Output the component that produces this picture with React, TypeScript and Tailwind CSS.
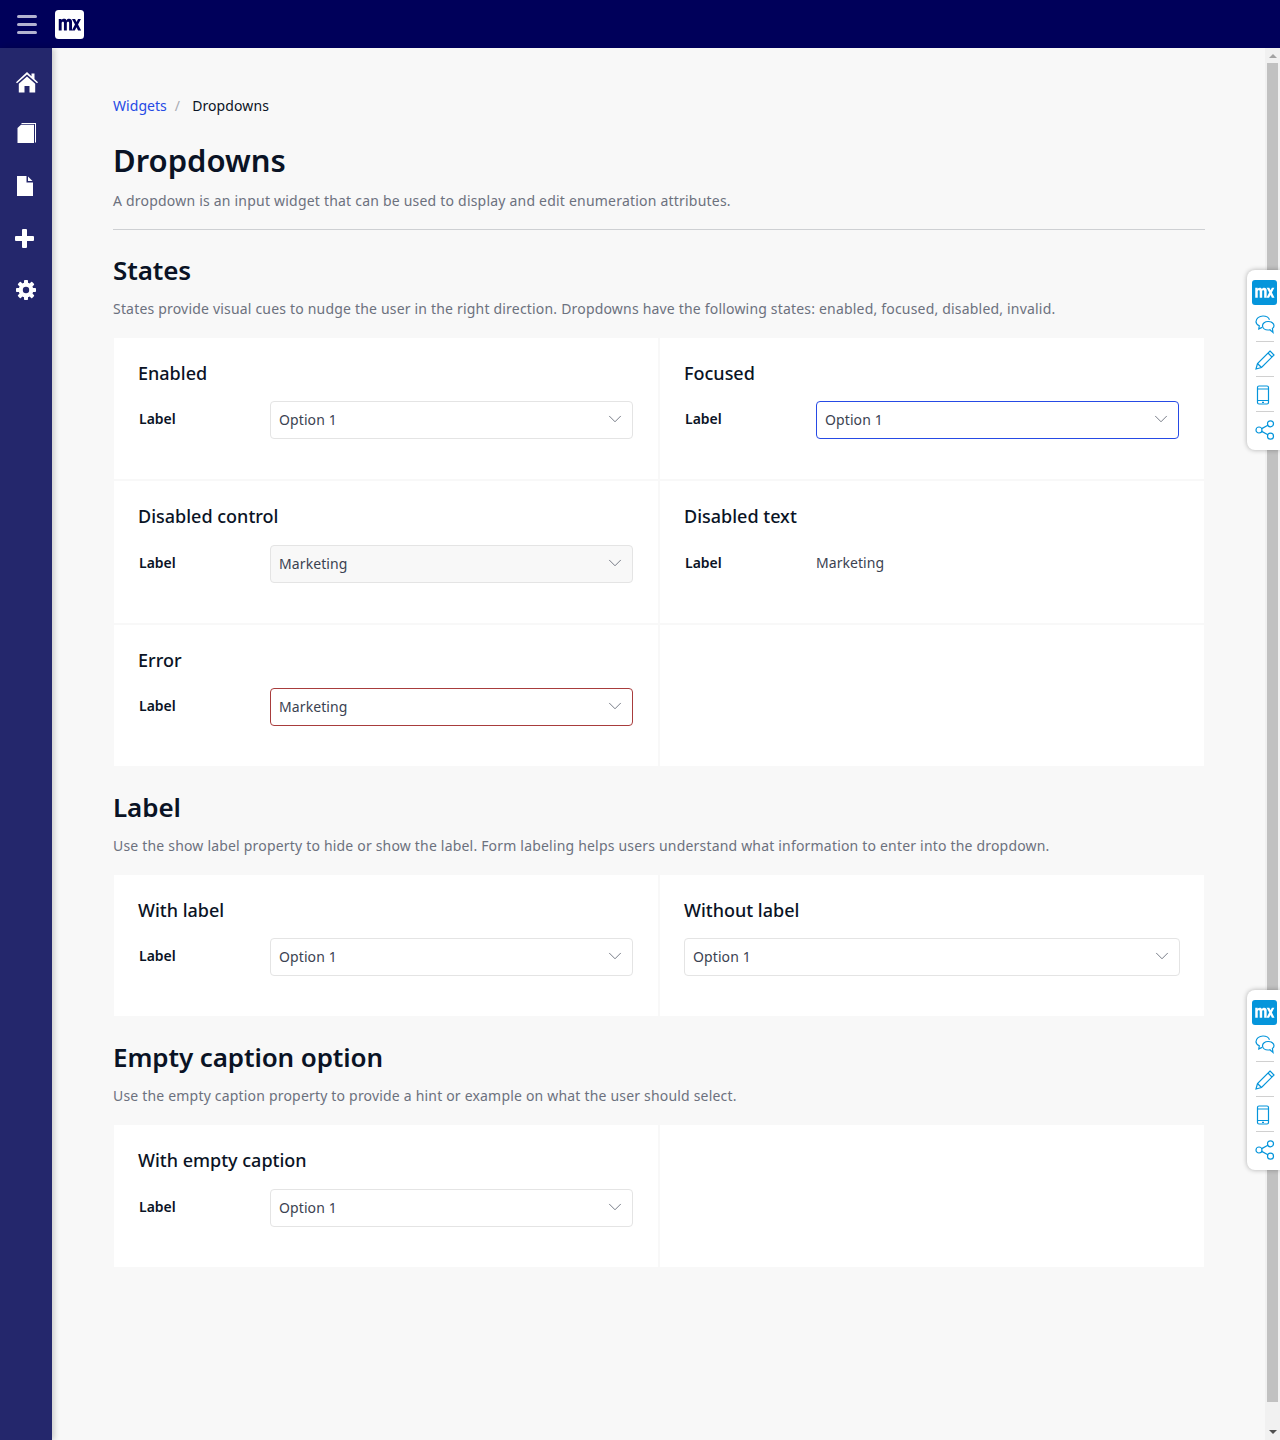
import React from "react";
import { ChevronDown } from "lucide-react";

const navy = "#00005a";

function Logo({ bg, fg, size }: { bg: string; fg: string; size: number }) {
  return (
    <svg width={size} height={size} viewBox="0 0 29 29">
      <rect width="29" height="29" rx="3.5" fill={bg} />
      <g transform="translate(0.4 0.4) scale(0.96)">
        <path
          fill={fg}
          d="M3.500 9h2.900v1.300c.6-1 1.500-1.500 2.600-1.500 1.200 0 2.100.5 2.500 1.600.7-1.100 1.700-1.600 2.800-1.600 1.900 0 3 1.100 3 3.100V21h-3v-7.700c0-.9-.4-1.400-1.100-1.400-.8 0-1.300.6-1.300 1.500V21h-3v-7.700c0-.9-.4-1.400-1.100-1.400-.8 0-1.300.6-1.300 1.500V21h-3z"
        />
        <path fill={fg} d="M17.300 9h3.200l1.500 3 1.600-3h3l-3 5.700 3.200 6.300h-3.200L22 17.600 20.200 21h-3.100l3.300-6.200z" />
      </g>
    </svg>
  );
}

function HomeIcon() {
  return (
    <svg width="22" height="21" viewBox="0 0 22 21" fill="white">
      <path d="M11 0 0 10.200l1 1.100L11 2.600l10 8.700 1-1.100-3.500-3.300V1.500h-3v2.800z" />
      <path d="M2.800 11.800 11 4.400l8.200 7.400v8.700h-5.700V14h-5v6.500H2.800z" />
    </svg>
  );
}
function BookIcon() {
  return (
    <svg width="20" height="21" viewBox="0 0 20 21" fill="white">
      <path d="M4.500 0H19v19.500h-1V1H4.500z" />
      <path d="M4 1.800H17V20H0.500V5z" />
    </svg>
  );
}
function FileIcon() {
  return (
    <svg width="16" height="20" viewBox="0 0 16 20" fill="white">
      <path d="M0 0h9.500v6.500H16V20H0z" />
      <path d="M11 0.500 15.500 5H11z" />
    </svg>
  );
}
function PlusIcon() {
  return (
    <svg width="19" height="19" viewBox="0 0 19 19" fill="white">
      <path d="M7 1a1 1 0 0 1 1-1h3a1 1 0 0 1 1 1v6h6a1 1 0 0 1 1 1v3a1 1 0 0 1-1 1h-6v6a1 1 0 0 1-1 1H8a1 1 0 0 1-1-1v-6H1a1 1 0 0 1-1-1V8a1 1 0 0 1 1-1h6z" />
    </svg>
  );
}
function GearIcon() {
  return (
    <svg width="20" height="20" viewBox="0 0 20 20">
      <g fill="white">
        <circle cx="10" cy="10" r="7.400" />
        {[0, 45, 90, 135, 180, 225, 270, 315].map((a) => (
          <rect key={a} x="8" y="0" width="4" height="5" rx="0.800" transform={`rotate(${a} 10 10)`} />
        ))}
      </g>
      <circle cx="10" cy="10" r="3.200" fill="#24276c" />
    </svg>
  );
}

function FloatingBar({ top }: { top: string }) {
  return (
    <div className={`absolute right-0 ${top} w-[33px] h-[180px] bg-white rounded-l-lg shadow-[0_0_5px_rgba(0,0,0,0.3)] flex flex-col items-center pt-[10px] pl-[2px]`}>
      <Logo bg="#0595db" fg="white" size={25} />
      <svg className="mt-[10px]" width="20" height="20" viewBox="0 0 20 20" fill="none" stroke="#0595db" strokeWidth="1.200">
        <path d="M7 12.400 3.800 14l.5-3.300C2.300 9.800 1 8.300 1 6.700 1 3.500 4.200 1 8 1c3 0 5.600 1.500 6.500 3.700" />
        <path d="M13 6.500c-3 0-5.500 1.900-5.500 4.300s2.500 4.200 5.500 4.200c.7 0 1.300-.1 1.900-.3l3.100 2.800-.6-3.900c1-.7 1.600-1.700 1.600-2.800 0-2.300-2.600-4.300-5.700-4.300z" />
      </svg>
      <div className="w-[18px] h-px bg-[#d0d0d0] mt-[6px]" />
      <svg className="mt-[8px]" width="20" height="20" viewBox="0 0 20 20" fill="none" stroke="#0595db" strokeWidth="1.200">
        <path d="M15 1 19 5 6.500 17.500 1 19l1.500-5.500z" />
        <path d="M13 3l4 4M2.500 13.500l4 4" />
      </svg>
      <div className="w-[18px] h-px bg-[#d0d0d0] mt-[6px]" />
      <svg className="mt-[8px] -ml-[3px]" width="20" height="20" viewBox="0 0 20 20" fill="none" stroke="#0595db" strokeWidth="1.200">
        <rect x="4.500" y="1" width="11" height="18" rx="1.500" />
        <path d="M4.500 4h11M4.500 15.500h11M9 17.300h2" />
      </svg>
      <div className="w-[18px] h-px bg-[#d0d0d0] mt-[6px]" />
      <svg className="mt-[8px]" width="20" height="20" viewBox="0 0 20 20" fill="none" stroke="#0595db" strokeWidth="1.200">
        <circle cx="4" cy="10" r="3" />
        <circle cx="15.500" cy="3.800" r="3" />
        <circle cx="15.500" cy="16.200" r="3" />
        <path d="M6.700 8.600l6.200-3.400M6.700 11.400l6.200 3.400" />
      </svg>
    </div>
  );
}

function Select({ value, variant = "default" }: { value: string; variant?: "default" | "focus" | "disabled" | "error" }) {
  const cls = {
    default: "border-[#e4e4e4] bg-white",
    focus: "border-[#264ae5] bg-white",
    disabled: "border-[#e4e4e4] bg-[#f8f8f8]",
    error: "border-[#a83c3c] bg-white",
  }[variant];
  return (
    <div className={`h-[38px] flex-1 min-w-0 border rounded flex items-center justify-between pl-2 pr-[6px] text-[14px] tracking-[0.1px] text-[#3b4251] ${cls}`}>
      <span className="-mt-[2px]">{value}</span>
      <ChevronDown size={22} strokeWidth={0.75} className="text-[#3b4251] -mt-[2px]" />
    </div>
  );
}

function Cell({ title, children, h = "h-[141px]" }: { title?: string; children?: React.ReactNode; h?: string }) {
  return (
    <div className={`bg-white px-6 pt-[22px] ${h}`}>
      {title && <h4 className="text-[18px] leading-[27px] font-medium text-[#0a1325] mb-[14px]">{title}</h4>}
      {children}
    </div>
  );
}

function Field({ children }: { children: React.ReactNode }) {
  return (
    <div className="flex items-start pr-px">
      <label className="w-[132px] pl-px pt-[7px] text-[14px] leading-[21px] font-semibold text-[#0a1325] shrink-0">Label</label>
      {children}
    </div>
  );
}

function Section({ title, text, className = "" }: { title: string; text: string; className?: string }) {
  return (
    <div className={className}>
      <h2 className="text-[26px] leading-[39px] font-semibold tracking-[-0.1px] text-[#0a1325]">{title}</h2>
      <p className="text-[14px] leading-[21px] tracking-[0.19px] text-[#6c717e] mt-[8px]">{text}</p>
    </div>
  );
}

function Grid({ children }: { children: React.ReactNode }) {
  return <div className="mx-px grid grid-cols-2 gap-[2px] bg-[#f8f8f8]">{children}</div>;
}

function NavItem({ children, className = "" }: { children: React.ReactNode; className?: string }) {
  return <div className={`h-[52px] w-full flex items-center justify-center ${className}`}>{children}</div>;
}

export default function App() {
  return (
    <div className="relative h-[1440px] overflow-hidden bg-[#f8f8f8] font-['Noto_Sans',sans-serif]">
      <header className="h-12 flex items-center" style={{ background: navy }}>
        <div className="w-[55px] pl-[17px] flex flex-col gap-[5px] shrink-0">
          <span className="block w-5 h-[3px] rounded-sm bg-[#b3b3d0]" />
          <span className="block w-5 h-[3px] rounded-sm bg-[#b3b3d0]" />
          <span className="block w-5 h-[3px] rounded-sm bg-[#b3b3d0]" />
        </div>
        <Logo bg="white" fg={navy} size={29} />
      </header>
      <div className="flex h-[1392px]">
        <aside className="w-[52px] shrink-0 bg-[#24276c] flex flex-col items-center z-10 shadow-[2px_0_6px_rgba(0,0,0,0.2)]">
          <NavItem className="mt-2 pl-[2px]"><HomeIcon /></NavItem>
          <NavItem className="pb-[2px] pl-[2px]"><BookIcon /></NavItem>
          <NavItem className="pr-[2px]"><FileIcon /></NavItem>
          <NavItem className="pr-[3px] pt-[1px]"><PlusIcon /></NavItem>
          <NavItem><GearIcon /></NavItem>
        </aside>
        <main className="flex-1 min-w-0 pl-[61px] pr-[60px] pt-[47px]">
          <nav className="flex text-[14px] leading-[21px] tracking-[0.05px] text-[#0a1325]">
            <span className="text-[#264ae5]">Widgets</span>
            <span className="text-[#a9acb3] ml-2 mr-3">/</span>
            <span className="tracking-[0.1px]">Dropdowns</span>
          </nav>
          <h1 className="text-[31px] leading-[46px] font-semibold text-[#0a1325] mt-[21px]">Dropdowns</h1>
          <p className="text-[14px] leading-[21px] tracking-[0.21px] text-[#6c717e] mt-[7px]">
            A dropdown is an input widget that can be used to display and edit enumeration attributes.
          </p>
          <div className="h-px bg-[#ced0d3] mt-[18px]" />
          <Section
            className="mt-[21px] mb-[19px]"
            title="States"
            text="States provide visual cues to nudge the user in the right direction. Dropdowns have the following states: enabled, focused, disabled, invalid."
          />
          <Grid>
            <Cell title="Enabled"><Field><Select value="Option 1" /></Field></Cell>
            <Cell title="Focused"><Field><Select value="Option 1" variant="focus" /></Field></Cell>
            <Cell title="Disabled control" h="h-[142px]"><div className="pt-px"><Field><Select value="Marketing" variant="disabled" /></Field></div></Cell>
            <Cell title="Disabled text" h="h-[142px]">
              <div className="pt-px"><Field><span className="pt-[7px] text-[14px] leading-[21px] tracking-[0.05px] text-[#3b4251]">Marketing</span></Field></div>
            </Cell>
            <Cell title="Error"><Field><Select value="Marketing" variant="error" /></Field></Cell>
            <Cell />
          </Grid>
          <Section
            className="mt-[22px] mb-[19px]"
            title="Label"
            text="Use the show label property to hide or show the label. Form labeling helps users understand what information to enter into the dropdown."
          />
          <Grid>
            <Cell title="With label"><Field><Select value="Option 1" /></Field></Cell>
            <Cell title="Without label"><div className="flex"><Select value="Option 1" /></div></Cell>
          </Grid>
          <Section
            className="mt-[22px] mb-[19px]"
            title="Empty caption option"
            text="Use the empty caption property to provide a hint or example on what the user should select."
          />
          <Grid>
            <Cell title="With empty caption" h="h-[142px]"><div className="pt-px"><Field><Select value="Option 1" /></Field></div></Cell>
            <Cell h="h-[142px]" />
          </Grid>
        </main>
        <div className="w-[15px] shrink-0 bg-[#f1f1f1] flex flex-col items-center">
          <div className="h-[15px] flex items-center justify-center">
            <div className="w-0 h-0 border-x-[4px] border-x-transparent border-b-[4px] border-b-[#a3a3a3]" />
          </div>
          <div className="w-[11px] h-[1339px] bg-[#c1c1c1]" />
          <div className="flex-1 flex items-end justify-center pb-[6px]">
            <div className="w-0 h-0 border-x-[4px] border-x-transparent border-t-[4px] border-t-[#505050]" />
          </div>
        </div>
      </div>
      <FloatingBar top="top-[270px]" />
      <FloatingBar top="top-[990px]" />
    </div>
  );
}
